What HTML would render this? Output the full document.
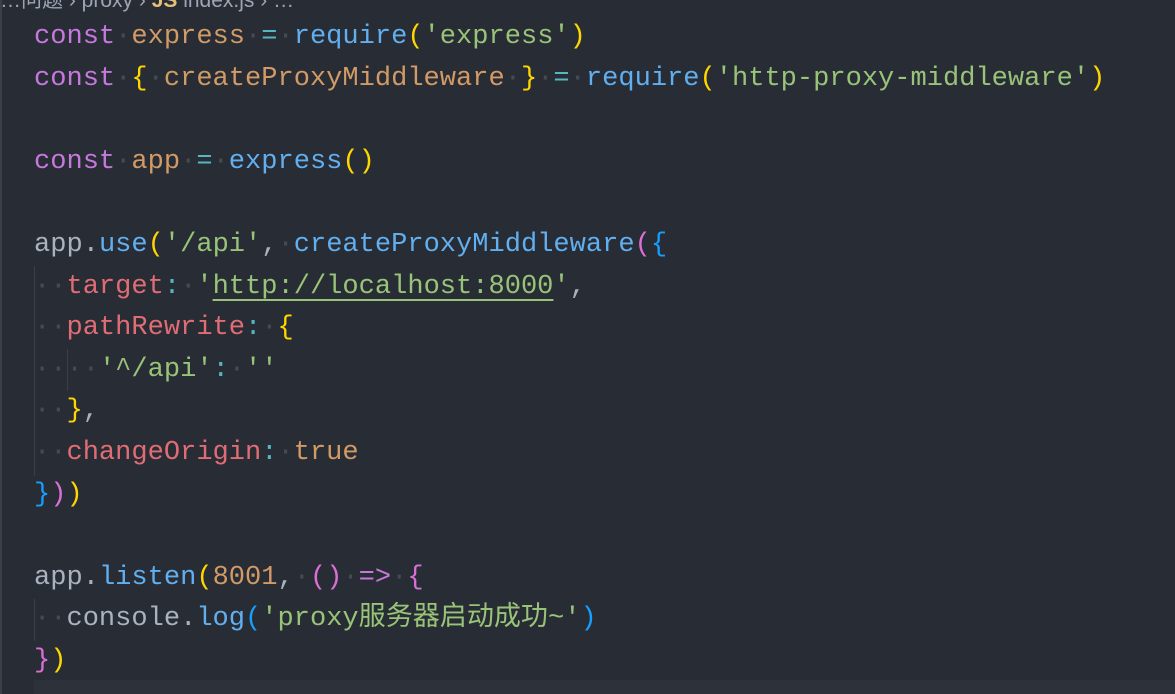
<!DOCTYPE html>
<html><head><meta charset="utf-8"><style>
html,body{margin:0;padding:0;background:#282c34;width:1175px;height:694px;overflow:hidden;}
.bc{position:absolute;left:0;top:-16px;font:21px "Liberation Sans","Noto Sans CJK SC",sans-serif;color:#9da5b4;white-space:pre}
.code{position:absolute;left:34px;top:16px;font-family:"Liberation Mono","Noto Sans CJK SC",monospace;font-size:27.05px;line-height:41.6px;color:#abb2bf;white-space:pre}
.k{color:#c678dd}.v{color:#d19a66}.f{color:#61afef}.s{color:#98c379}.p{color:#e06c75}.o{color:#56b6c2}
.y{color:#ffd700}.m{color:#da70d6}.b{color:#179fff}.d{color:#454b55}
.u{text-decoration:underline;text-decoration-color:#98c379;text-underline-offset:6px}
.guide{position:absolute;width:1px;background:#3b4048}
.hl{position:absolute;left:34px;top:680px;width:1141px;height:14px;background:#2c313a}
.edge{position:absolute;left:0;top:0;width:2px;height:694px;background:#3a3f4a}
</style></head><body>
<div class="edge"></div>
<div class="hl"></div>
<div class="bc">…问题 › proxy › <span style="color:#e5c07b;font-weight:bold">JS</span> index.js › …</div>
<div class="guide" style="left:34px;top:266px;height:210px"></div>
<div class="guide" style="left:67px;top:349px;height:42px"></div>
<div class="guide" style="left:34px;top:599px;height:42px"></div>
<div class="code"><span class="k">const</span><span class="d">·</span><span class="v">express</span><span class="d">·</span><span class="o">=</span><span class="d">·</span><span class="f">require</span><span class="y">(</span><span class="s">'express'</span><span class="y">)</span>
<span class="k">const</span><span class="d">·</span><span class="y">{</span><span class="d">·</span><span class="v">createProxyMiddleware</span><span class="d">·</span><span class="y">}</span><span class="d">·</span><span class="o">=</span><span class="d">·</span><span class="f">require</span><span class="y">(</span><span class="s">'http-proxy-middleware'</span><span class="y">)</span>

<span class="k">const</span><span class="d">·</span><span class="v">app</span><span class="d">·</span><span class="o">=</span><span class="d">·</span><span class="f">express</span><span class="y">()</span>

app.<span class="f">use</span><span class="y">(</span><span class="s">'/api'</span>,<span class="d">·</span><span class="f">createProxyMiddleware</span><span class="m">(</span><span class="b">{</span>
<span class="d">··</span><span class="p">target</span><span class="o">:</span><span class="d">·</span><span class="s">'<span class="u">http://localhost:8000</span>'</span>,
<span class="d">··</span><span class="p">pathRewrite</span><span class="o">:</span><span class="d">·</span><span class="y">{</span>
<span class="d">····</span><span class="s">'^/api'</span><span class="o">:</span><span class="d">·</span><span class="s">''</span>
<span class="d">··</span><span class="y">}</span>,
<span class="d">··</span><span class="p">changeOrigin</span><span class="o">:</span><span class="d">·</span><span class="v">true</span>
<span class="b">}</span><span class="m">)</span><span class="y">)</span>

app.<span class="f">listen</span><span class="y">(</span><span class="v">8001</span>,<span class="d">·</span><span class="m">()</span><span class="d">·</span><span class="k">=&gt;</span><span class="d">·</span><span class="m">{</span>
<span class="d">··</span>console.<span class="f">log</span><span class="b">(</span><span class="s">'proxy服务器启动成功~'</span><span class="b">)</span>
<span class="m">}</span><span class="y">)</span></div>
</body></html>
